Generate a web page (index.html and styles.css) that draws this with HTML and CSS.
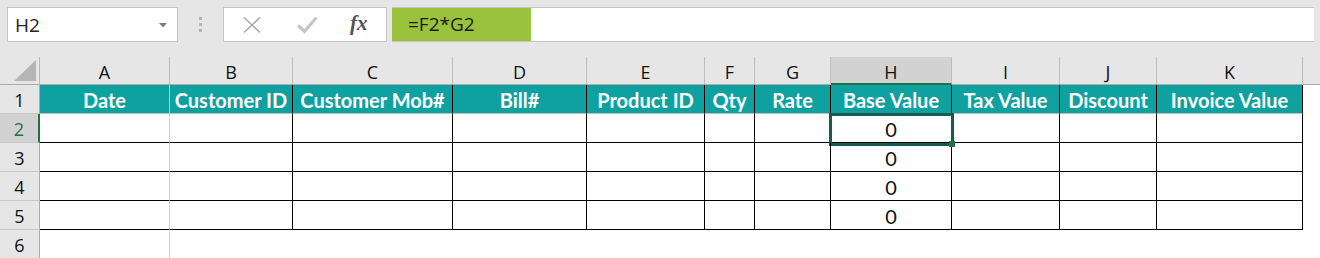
FILE: index.html
```html
<!DOCTYPE html>
<html lang="en">
<head>
  <meta charset="UTF-8">
  <title>Invoice sheet</title>
  <link rel="stylesheet" href="styles.css">
</head>
<body>

  <!-- Barra della formula -->
  <div class="toolbar">
    <div class="name-box">
      <span>H2</span>
      <svg class="caret" width="8" height="5" viewBox="0 0 8 5"><path d="M0 0H8L4 4.5Z" fill="#7b7b7b"/></svg>
    </div>
    <div class="grip"><i></i><i></i><i></i></div>
    <div class="fn-box">
      <svg width="20" height="18" viewBox="0 0 20 18"><path d="M2 1.5L18 16.5M18 1.5L2 16.5" stroke="#a8a8a8" stroke-width="1.5" fill="none"/></svg>
      <svg width="22" height="18" viewBox="0 0 22 18"><path d="M2 9.5L8.5 15.5L20.5 1.5" stroke="#c6c6c6" stroke-width="3.2" fill="none"/></svg>
      <span class="fx">fx</span>
    </div>
    <div class="formula">
      <span class="formula-text">=F2*G2</span>
    </div>
  </div>

  <!-- Griglia -->
  <div class="sheet">
    <div class="corner"><svg width="22" height="21" viewBox="0 0 22 21"><path d="M22 0V21H0Z" fill="#b5b5b5"/></svg></div>
    <div class="hd">A</div>
    <div class="hd">B</div>
    <div class="hd">C</div>
    <div class="hd">D</div>
    <div class="hd">E</div>
    <div class="hd">F</div>
    <div class="hd">G</div>
    <div class="hd sel">H</div>
    <div class="hd">I</div>
    <div class="hd">J</div>
    <div class="hd">K</div>
    <div class="hd end"></div>

    <div class="rh">1</div>
    <div class="t first">Date</div>
    <div class="t">Customer ID</div>
    <div class="t">Customer Mob#</div>
    <div class="t">Bill#</div>
    <div class="t">Product ID</div>
    <div class="t">Qty</div>
    <div class="t">Rate</div>
    <div class="t">Base Value</div>
    <div class="t">Tax Value</div>
    <div class="t">Discount</div>
    <div class="t">Invoice Value</div>
    <div class="blank"></div>

    <div class="rh sel">2</div>
    <div class="c first"></div><div class="c"></div><div class="c"></div><div class="c"></div><div class="c"></div><div class="c"></div><div class="c"></div>
    <div class="c num active">0<span class="handle"></span></div>
    <div class="c"></div><div class="c"></div><div class="c"></div><div class="blank"></div>

    <div class="rh">3</div>
    <div class="c first"></div><div class="c"></div><div class="c"></div><div class="c"></div><div class="c"></div><div class="c"></div><div class="c"></div>
    <div class="c num">0</div>
    <div class="c"></div><div class="c"></div><div class="c"></div><div class="blank"></div>

    <div class="rh">4</div>
    <div class="c first"></div><div class="c"></div><div class="c"></div><div class="c"></div><div class="c"></div><div class="c"></div><div class="c"></div>
    <div class="c num">0</div>
    <div class="c"></div><div class="c"></div><div class="c"></div><div class="blank"></div>

    <div class="rh">5</div>
    <div class="c first"></div><div class="c"></div><div class="c"></div><div class="c"></div><div class="c"></div><div class="c"></div><div class="c"></div>
    <div class="c num">0</div>
    <div class="c"></div><div class="c"></div><div class="c"></div><div class="blank"></div>

    <div class="rh last">6</div>
    <div class="grid-a"></div>
  </div>

</body>
</html>
```

FILE: styles.css
```css
* {
  margin: 0;
  padding: 0;
  box-sizing: border-box;
}
body {
  background: #fff;
  font-family: 'Open Sans', sans-serif;
  width: 1320px;
  height: 258px;
  overflow: hidden;
}

/* Toolbar */
.toolbar {
  height: 57px;
  background: #e6e6e6;
  display: flex;
  align-items: flex-start;
  padding: 7px 6px 0 7px;
}
.name-box {
  width: 171px;
  height: 35px;
  background: #fff;
  border: 1px solid #c6c6c6;
  display: flex;
  align-items: center;
  justify-content: space-between;
  padding: 0 10px 0 7px;
  font-size: 19px;
  color: #222;
}
.caret {
  margin-top: 2px;
}
.grip {
  width: 45px;
  height: 35px;
  display: flex;
  flex-direction: column;
  align-items: center;
  justify-content: center;
  gap: 3px;
}
.grip i {
  width: 3px;
  height: 3px;
  background: #b4b4b4;
}
.fn-box {
  width: 164px;
  height: 35px;
  background: #fff;
  border: 1px solid #c6c6c6;
  display: flex;
  align-items: center;
  padding: 0 0 0 18px;
  gap: 15px;
}
.fn-box svg:nth-child(2) {
  margin-left: 19px;
}
.fx {
  font-family: 'Liberation Serif', serif;
  font-style: italic;
  font-weight: bold;
  font-size: 21px;
  color: #555;
  margin-left: 17px;
  margin-top: -3px;
}
.formula {
  flex: 1;
  height: 35px;
  margin-left: 5px;
  background: #fff;
  border-top: 1px solid #c6c6c6;
  border-bottom: 1px solid #c6c6c6;
  display: flex;
}
.formula-text {
  width: 139px;
  background: #9bc23c;
  font-size: 19px;
  color: #1a1a1a;
  padding-left: 16px;
  line-height: 33px;
}

/* Sheet */
.sheet {
  display: grid;
  grid-template-columns: 40px 130px 123px 160px 134px 118px 50px 76px 121px 108px 97px 146px 17px;
  grid-template-rows: 28px 29px 29px 29px 29px 29px 28px;
}
.corner {
  background: #e6e6e6;
  border-right: 1px solid #b9b9b9;
  border-bottom: 1px solid #ababab;
  display: flex;
  align-items: flex-end;
  justify-content: flex-end;
  padding: 0 3px 3px 0;
}
.hd {
  background: #e6e6e6;
  border-right: 1px solid #bdbdbd;
  border-bottom: 1px solid #ababab;
  text-align: center;
  font-size: 18px;
  line-height: 31px;
  color: #111;
}
.hd.sel {
  background: #d2d2d2;
  border-bottom: 2px solid #217346;
}
.hd.end {
  border-right: none;
}
.rh {
  background: #e6e6e6;
  border-right: 1px solid #ababab;
  border-bottom: 1px solid #c9c9c9;
  text-align: center;
  font-size: 18px;
  line-height: 31px;
  color: #111;
}
.rh.sel {
  background: #d2d2d2;
  color: #217346;
  border-right: 2px solid #217346;
}
.rh.last {
  border-bottom: none;
}

/* Riga titoli */
.t {
  background: #0fa19f;
  color: #fff;
  font-family: 'Lato', sans-serif;
  font-weight: bold;
  font-size: 20px;
  line-height: 31px;
  text-align: center;
  white-space: nowrap;
  overflow: hidden;
  border-right: 1px solid #000;
  border-bottom: 1px solid #bcbcbc;
}
.t.first {
  border-right-color: #9fcfce;
}

/* Celle dati */
.c {
  border-right: 1px solid #000;
  border-bottom: 1px solid #000;
  position: relative;
}
.c.first {
  border-right-color: #d4d4d4;
}
.num {
  font-family: 'Lato', sans-serif;
  font-size: 20px;
  line-height: 31px;
  text-align: center;
  color: #111;
}
.active::after {
  content: "";
  position: absolute;
  left: -2px;
  top: -1px;
  right: -3px;
  bottom: -4px;
  border: 3px solid #185a54;
}
.handle {
  position: absolute;
  right: -4px;
  bottom: -5px;
  width: 6px;
  height: 6px;
  background: #217346;
  z-index: 2;
}
.blank {
  background: #fff;
}
.grid-a {
  border-right: 1px solid #d4d4d4;
}
```
